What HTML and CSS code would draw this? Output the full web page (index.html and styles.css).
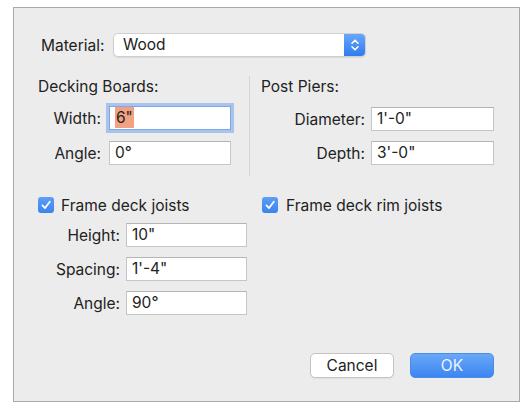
FILE: index.html
```html
<!DOCTYPE html>
<html lang="en">
<head>
<meta charset="utf-8">
<title>Deck Settings</title>
<link rel="stylesheet" href="styles.css">
</head>
<body>
<div class="dialog">
  <div class="material-row">
    <span class="material-label">Material:</span>
    <div class="popup">
      <span class="popup-value">Wood</span>
      <span class="stepper">
        <svg width="10" height="14" viewBox="0 0 10 14">
          <path d="M2 5.2 L5 2.2 L8 5.2 M2 8.8 L5 11.8 L8 8.8" fill="none" stroke="#fff" stroke-width="1.6" stroke-linecap="round" stroke-linejoin="round"/>
        </svg>
      </span>
    </div>
  </div>

  <div class="columns">
    <div class="group group-left">
      <div class="heading">Decking Boards:</div>
      <div class="field-grid grid-left">
        <span class="label">Width:</span>
        <div class="box focused"><span class="selected">6"</span></div>
        <span class="label">Angle:</span>
        <div class="box">0°</div>
      </div>
    </div>
    <div class="separator"></div>
    <div class="group group-right">
      <div class="heading">Post Piers:</div>
      <div class="field-grid grid-right">
        <span class="label">Diameter:</span>
        <div class="box">1'-0"</div>
        <span class="label">Depth:</span>
        <div class="box">3'-0"</div>
      </div>
    </div>
  </div>

  <div class="checks">
    <div class="check-col check-left">
      <div class="check">
        <span class="checkbox">
          <svg width="12" height="12" viewBox="0 0 12 12"><path d="M2.4 6.4 L5 9 L9.8 2.8" fill="none" stroke="#fff" stroke-width="1.8" stroke-linecap="round" stroke-linejoin="round"/></svg>
        </span>
        <span>Frame deck joists</span>
      </div>
      <div class="field-grid grid-joists">
        <span class="label">Height:</span>
        <div class="box">10"</div>
        <span class="label">Spacing:</span>
        <div class="box">1'-4"</div>
        <span class="label">Angle:</span>
        <div class="box">90°</div>
      </div>
    </div>
    <div class="check-col check-right">
      <div class="check">
        <span class="checkbox">
          <svg width="12" height="12" viewBox="0 0 12 12"><path d="M2.4 6.4 L5 9 L9.8 2.8" fill="none" stroke="#fff" stroke-width="1.8" stroke-linecap="round" stroke-linejoin="round"/></svg>
        </span>
        <span>Frame deck rim joists</span>
      </div>
    </div>
  </div>

  <div class="buttons">
    <div class="btn btn-cancel">Cancel</div>
    <div class="btn btn-ok">OK</div>
  </div>
</div>
</body>
</html>
```

FILE: styles.css
```css
* {
  box-sizing: border-box;
}

body {
  margin: 0;
  background: #ffffff;
  font-family: Inter, "Noto Sans", sans-serif;
  font-size: 15.5px;
  color: #222222;
}

.dialog {
  margin: 7px 0 0 13px;
  width: 507px;
  height: 395px;
  border: 1px solid #a9a9a9;
  background: #ececec;
  display: flex;
  flex-direction: column;
  padding: 25px 25px 23px 0;
}

/* Material popup */
.material-row {
  display: flex;
  align-items: center;
  height: 24px;
  padding-left: 27px;
}

.material-label {
  width: 72px;
}

.popup {
  width: 253px;
  height: 24px;
  display: flex;
  background: #fff;
  border: 1px solid #cfcfcf;
  border-radius: 5px;
  box-shadow: 0 1px 1px rgba(0, 0, 0, 0.08);
  overflow: hidden;
}

.popup-value {
  flex: 1;
  padding-left: 9px;
  line-height: 22px;
}

.stepper {
  width: 21px;
  background: linear-gradient(#68a6f8, #2f7cf0);
  display: flex;
  align-items: center;
  justify-content: center;
}

/* Two top groups */
.columns {
  display: flex;
  margin-top: 20px;
}

.group-left {
  padding-left: 24px;
  width: 235px;
}

.separator {
  width: 1px;
  height: 100px;
  margin-top: -1px;
  background: #d6d6d6;
}

.group-right {
  padding-left: 11px;
}

.heading {
  height: 19px;
  line-height: 19px;
}

.field-grid {
  display: grid;
  align-items: center;
}

.label {
  text-align: right;
}

.grid-left {
  margin-top: 10px;
  grid-template-columns: 63px 122px;
  column-gap: 8px;
  row-gap: 11px;
}

.grid-right {
  margin-top: 11px;
  grid-template-columns: 104px 123px;
  column-gap: 6px;
  row-gap: 10px;
}

.box {
  height: 24px;
  line-height: 22px;
  background: #fff;
  border: 1px solid #c6c6c6;
  border-top-color: #b4b4b4;
  padding-left: 5px;
  white-space: nowrap;
}

.box.focused {
  border-color: #7ea7e3;
  box-shadow: 0 0 0 3px #a9c4ec;
}

.selected {
  background: #f2a183;
  padding: 1px 1px;
}

/* Checkbox section */
.checks {
  display: flex;
  margin-top: 19px;
}

.check {
  display: flex;
  align-items: center;
  height: 20px;
  gap: 7px;
}

.checkbox {
  width: 16px;
  height: 16px;
  border-radius: 3px;
  background: linear-gradient(#5d9ef6, #3a84ee);
  display: flex;
  align-items: center;
  justify-content: center;
}

.check-left {
  padding-left: 24px;
  width: 248px;
}

.check-right .check {
  gap: 8px;
}

.grid-joists {
  margin-top: 8px;
  grid-template-columns: 82px 121px;
  column-gap: 6px;
  row-gap: 10px;
}

/* Dialog buttons */
.buttons {
  margin-top: auto;
  display: flex;
  justify-content: flex-end;
  gap: 16px;
}

.btn {
  width: 84px;
  height: 25px;
  border-radius: 5px;
  display: flex;
  align-items: center;
  justify-content: center;
}

.btn-cancel {
  background: #fff;
  border: 1px solid #c4c4c4;
  box-shadow: 0 1px 1px rgba(0, 0, 0, 0.06);
}

.btn-ok {
  background: linear-gradient(#6aa8f8, #3c86f2);
  color: #eef4ff;
  border: 1px solid #4a8cea;
}
```
